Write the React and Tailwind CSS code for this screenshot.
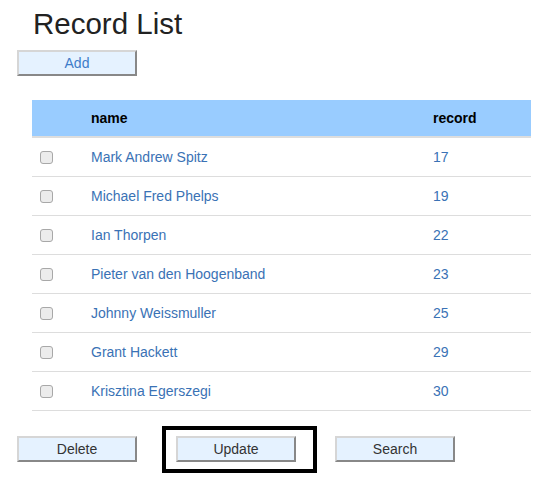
import React from 'react'

const records = [
  { name: 'Mark Andrew Spitz', record: 17 },
  { name: 'Michael Fred Phelps', record: 19 },
  { name: 'Ian Thorpen', record: 22 },
  { name: 'Pieter van den Hoogenband', record: 23 },
  { name: 'Johnny Weissmuller', record: 25 },
  { name: 'Grant Hackett', record: 29 },
  { name: 'Krisztina Egerszegi', record: 30 },
]

const Btn = ({ children, blue }) => (
  <button
    className={
      'w-[120px] h-[26px] bg-[#e5f2ff] border-2 border-t-[#d6d6d6] border-l-[#d6d6d6] border-b-[#888] border-r-[#888] text-[14px] leading-none ' +
      (blue ? 'text-[#3d7cc9]' : 'text-[#333]')
    }
  >
    {children}
  </button>
)

const Check = () => (
  <span className="block w-[13px] h-[13px] rounded-[3px] border border-[#a8a8a8] bg-[#ececec]" />
)

const App = () => {
  return (
    <div className="w-[556px] h-[482px] bg-white font-['Liberation_Sans',Arial,sans-serif] text-[14px] text-[#333]">
      <h1 className="pl-[33px] pt-[8px] text-[29.5px] leading-[32px] text-[#222]">Record List</h1>

      <div className="pl-[17px] mt-[10px]">
        <Btn blue>Add</Btn>
      </div>

      <table className="ml-[32px] mt-[24px] w-[499px] border-collapse">
        <thead>
          <tr className="bg-[#99ccff] border-b-2 border-[#dddddd]">
            <th className="w-[51px] h-[37px]"></th>
            <th className="w-[342px] text-left font-bold text-black pl-[8px] pt-[1px]">name</th>
            <th className="text-left font-bold text-black pl-[8px] pt-[1px]">record</th>
          </tr>
        </thead>
        <tbody>
          {records.map((r) => (
            <tr key={r.name} className="border-b border-[#dddddd]">
              <td className="h-[39px] pl-[8px] pt-[1px]">
                <Check />
              </td>
              <td className="pl-[8px] pt-[1px] text-[#3a72b5]">{r.name}</td>
              <td className="pl-[8px] pt-[1px] text-[#3a72b5]">{r.record}</td>
            </tr>
          ))}
        </tbody>
      </table>

      <div className="flex items-center pl-[17px] mt-[15px]">
        <Btn>Delete</Btn>
        <div className="ml-[25px] border-[4px] border-black w-[155px] h-[47px] flex items-center pl-[10px]">
          <Btn>Update</Btn>
        </div>
        <div className="ml-[18px]">
          <Btn>Search</Btn>
        </div>
      </div>
    </div>
  )
}

export default App
